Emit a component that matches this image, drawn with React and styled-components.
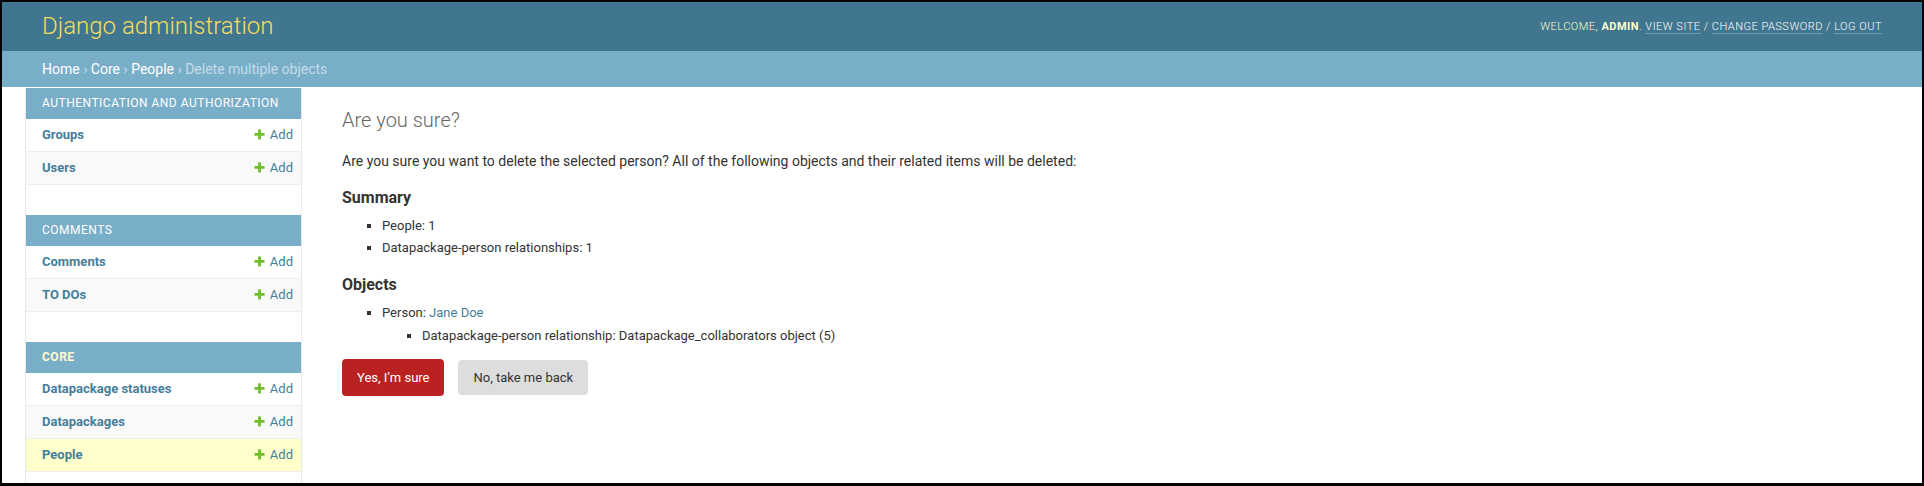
import React from 'react'
import styled, { createGlobalStyle } from 'styled-components'

const GlobalStyle = createGlobalStyle`
  html, body {
    margin: 0;
    padding: 0;
    background: #000;
  }
  body {
    font-family: Roboto, "Liberation Sans", Arial, sans-serif;
    font-size: 14px;
    color: #333;
  }
`

const Frame = styled.div`
  margin: 2px 2px 0 2px;
  height: 481px;
  background: #fff;
  overflow: hidden;
  display: flex;
  flex-direction: column;
`

const Header = styled.header`
  display: flex;
  justify-content: space-between;
  align-items: center;
  padding: 10px 40px;
  background: #417690;
  color: #ffc;
`

const Branding = styled.h1`
  margin: 0 20px 0 0;
  font-weight: 300;
  font-size: 24px;
  line-height: 29px;
  color: #f5dd5d;
`

const UserTools = styled.div`
  font-weight: 300;
  font-size: 11px;
  letter-spacing: 0.5px;
  text-transform: uppercase;
  text-align: right;
  color: #ffc;

  strong {
    font-weight: 700;
  }
`

const ToolLink = styled.a`
  color: #fff;
  text-decoration: none;
  border-bottom: 1px solid rgba(255, 255, 255, 0.25);
`

const Breadcrumbs = styled.div`
  background: #79aec8;
  padding: 10px 40px;
  font-size: 14px;
  color: #c4dce8;

  a {
    color: #fff;
    text-decoration: none;
  }
`

const Main = styled.div`
  flex: 1 0 auto;
  display: flex;
`

const Toggle = styled.div`
  flex: 0 0 23px;
  border-right: 1px solid #eaeaea;
  background: #fff;
`

const Sidebar = styled.nav`
  flex: 0 0 275px;
  width: 275px;
  border-top: 1px solid transparent;
  border-right: 1px solid #eaeaea;
  background: #fff;
`

const Module = styled.table`
  width: 100%;
  border-collapse: collapse;
  margin-bottom: 30px;
`

const Caption = styled.caption`
  text-align: left;
  white-space: nowrap;
  padding: 8px 8px 8px 16px;
  font-size: 12px;
  line-height: 15px;
  font-weight: ${({ $current }) => ($current ? 700 : 400)};
  letter-spacing: 0.5px;
  text-transform: uppercase;
  background: #79aec8;
  color: ${({ $current }) => ($current ? '#ffc' : '#fff')};
`

const Row = styled.tr`
  background: ${({ $current, $alt }) => ($current ? '#ffc' : $alt ? '#f9f9f9' : '#fff')};
`

const ModelCell = styled.th`
  width: 100%;
  height: 16px;
  text-align: left;
  font-size: 13px;
  line-height: 16px;
  font-weight: 700;
  padding: 8px 8px 8px 16px;
  border-bottom: 1px solid #eee;

  a {
    color: #447e9b;
    text-decoration: none;
  }
`

const AddCell = styled.td`
  height: 16px;
  white-space: nowrap;
  font-size: 13px;
  line-height: 16px;
  padding: 8px;
  border-bottom: 1px solid #eee;
`

const AddLink = styled.a`
  display: flex;
  align-items: center;
  gap: 4px;
  height: 16px;
  color: #447e9b;
  text-decoration: none;

  svg {
    display: block;
    margin-top: -1px;
  }
`

const Content = styled.main`
  flex: 1;
  padding: 21px 40px 20px;
`

const Title = styled.h1`
  margin: 0 0 20px;
  font-weight: 300;
  font-size: 20px;
  color: #666;
`

const Para = styled.p`
  margin: 0.2em 0 0.8em;
  padding: 0;
  line-height: 140%;
`

const SubHead = styled.h2`
  font-size: 16px;
  margin: 1em 0 0.5em;
  color: #333;
`

const List = styled.ul`
  margin: 0.2em 0 ${({ $nested }) => ($nested ? '0' : '0.8em')};
  padding-left: 40px;
`

const Item = styled.li`
  list-style-type: square;
  padding: 1px 0;
  font-size: 13px;
  line-height: 20px;

  a {
    color: #447e9b;
    text-decoration: none;
  }
`

const Actions = styled.div`
  display: flex;
  align-items: center;
  gap: 14px;
  margin-top: 6px;
`

const DangerButton = styled.button`
  font-family: Roboto, "Liberation Sans", Arial, sans-serif;
  font-size: 13px;
  height: 37px;
  padding: 0 15px;
  border: none;
  border-radius: 4px;
  background: #ba2121;
  color: #fff;
`

const CancelLink = styled.a`
  display: inline-block;
  height: 15px;
  line-height: 15px;
  padding: 10px 15px;
  border-radius: 4px;
  background: #ddd;
  color: #333;
  font-size: 13px;
  text-decoration: none;
`

const PlusIcon = () => (
  <svg width="13" height="13" viewBox="0 0 1792 1792">
    <path
      fill="#70bf2b"
      d="M1600 796v192q0 40-28 68t-68 28h-416v416q0 40-28 68t-68 28h-192q-40 0-68-28t-28-68v-416h-416q-40 0-68-28t-28-68v-192q0-40 28-68t68-28h416v-416q0-40 28-68t68-28h192q40 0 68 28t28 68v416h416q40 0 68 28t28 68z"
    />
  </svg>
)

const apps = [
  { name: 'Authentication and Authorization', models: ['Groups', 'Users'] },
  { name: 'Comments', models: ['Comments', 'TO DOs'] },
  { name: 'Core', current: true, models: ['Datapackage statuses', 'Datapackages', 'People'] },
]

export default function App() {
  return (
    <>
      <GlobalStyle />
      <Frame>
        <Header>
          <Branding>Django administration</Branding>
          <UserTools>
            Welcome, <strong>admin</strong>. <ToolLink href="#">View site</ToolLink> /{' '}
            <ToolLink href="#">Change password</ToolLink> / <ToolLink href="#">Log out</ToolLink>
          </UserTools>
        </Header>
        <Breadcrumbs>
          <a href="#">Home</a> › <a href="#">Core</a> › <a href="#">People</a> › Delete multiple objects
        </Breadcrumbs>
        <Main>
          <Toggle />
          <Sidebar>
            {apps.map((app) => (
              <Module key={app.name}>
                <Caption $current={app.current}>{app.name}</Caption>
                <tbody>
                  {app.models.map((m, i) => (
                    <Row key={m} $alt={i % 2 === 1} $current={app.current && m === 'People'}>
                      <ModelCell scope="row">
                        <a href="#">{m}</a>
                      </ModelCell>
                      <AddCell>
                        <AddLink href="#">
                          <PlusIcon />
                          Add
                        </AddLink>
                      </AddCell>
                    </Row>
                  ))}
                </tbody>
              </Module>
            ))}
          </Sidebar>
          <Content>
            <Title>Are you sure?</Title>
            <Para>
              Are you sure you want to delete the selected person? All of the following objects and their
              related items will be deleted:
            </Para>
            <SubHead>Summary</SubHead>
            <List>
              <Item>People: 1</Item>
              <Item>Datapackage-person relationships: 1</Item>
            </List>
            <SubHead>Objects</SubHead>
            <List>
              <Item>
                Person: <a href="#">Jane Doe</a>
                <List $nested>
                  <Item>Datapackage-person relationship: Datapackage_collaborators object (5)</Item>
                </List>
              </Item>
            </List>
            <Actions>
              <DangerButton type="button">Yes, I’m sure</DangerButton>
              <CancelLink href="#">No, take me back</CancelLink>
            </Actions>
          </Content>
        </Main>
      </Frame>
    </>
  )
}
